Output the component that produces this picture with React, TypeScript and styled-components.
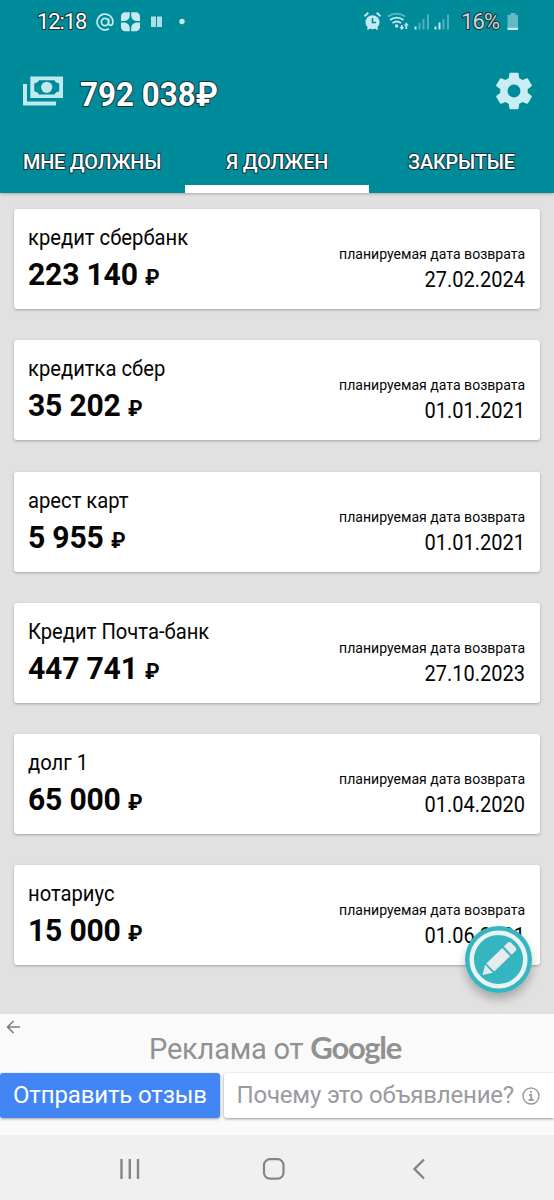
import React from "react";
import styled, { createGlobalStyle } from "styled-components";

const GlobalStyle = createGlobalStyle`
  * { box-sizing: border-box; }
  body { margin: 0; background: #e1e1e1; font-family: Roboto, "Noto Sans", sans-serif; color: #050505; }
  svg { display: block; flex: none; }
`;

const Screen = styled.div`
  width: 554px;
  height: 1200px;
  display: flex;
  flex-direction: column;
  overflow: hidden;
  position: relative;
`;

const Header = styled.header`
  height: 193px;
  flex: none;
  background: #008b9b;
  display: flex;
  flex-direction: column;
  box-shadow: 0 1px 3px rgba(0, 0, 0, 0.25);
`;

const Outlined = styled.span`
  color: #fff;
  -webkit-text-stroke: 2px #12343a;
  paint-order: stroke fill;
  white-space: nowrap;
`;

const StatusBar = styled.div`
  height: 44px;
  flex: none;
  padding: 0 35px 0 37px;
  display: flex;
  justify-content: space-between;
  align-items: center;
`;

const StatusGroup = styled.div`
  display: flex;
  align-items: center;
`;

const Clock = styled(Outlined)`
  font-size: 22px;
  line-height: 24px;
  width: 59px;
  letter-spacing: -1.1px;
`;

const Percent = styled(Outlined)`
  margin-left: 12px;
  font-size: 22px;
  line-height: 24px;
  color: #cdd5d6;
  width: 46px;
  letter-spacing: -0.9px;
`;

const TotalRow = styled.div`
  height: 97px;
  flex: none;
  padding: 0 18px 4px 23px;
  display: flex;
  align-items: center;
  justify-content: space-between;
`;

const TotalGroup = styled.div`
  display: flex;
  align-items: center;
  gap: 17px;
`;

const Total = styled(Outlined)`
  font-size: 33px;
  font-weight: 700;
  line-height: 38px;
  padding-top: 9px;
  transform: scaleX(0.95);
  transform-origin: left;
`;

const Tabs = styled.nav`
  flex: 1;
  display: grid;
  grid-template-columns: repeat(3, 1fr);
`;

const Tab = styled.div<{ $active?: boolean }>`
  border-bottom: 8px solid ${(p) => (p.$active ? "#fff" : "transparent")};
  padding-top: 9px;
  text-align: center;
  font-size: 21px;
  font-weight: 500;
  line-height: 24px;
  letter-spacing: -0.2px;
`;

const TabLabel = styled(Outlined)`
  display: inline-block;
  transform: scaleX(0.945);
`;

const List = styled.main`
  flex: 1;
  padding: 16px 14px 0;
  display: flex;
  flex-direction: column;
  gap: 31.3px;
`;

const Card = styled.article`
  height: 100px;
  flex: none;
  background: #fff;
  border-radius: 3px;
  box-shadow: 0 1px 3px rgba(0, 0, 0, 0.28);
  padding: 0 15px 0 14px;
  display: flex;
  justify-content: space-between;
  white-space: nowrap;
`;

const Debt = styled.div`
  padding-top: 16px;
`;

const Name = styled.div`
  font-size: 21.5px;
  line-height: 26px;
  transform: scaleX(0.94);
  transform-origin: left;
`;

const Amount = styled.div`
  margin-top: 5px;
  font-size: 32px;
  line-height: 36px;
  font-weight: 700;
  letter-spacing: -0.2px;
  transform: scaleX(0.94);
  transform-origin: left;
`;

const Currency = styled.span`
  font-size: 22px;
`;

const Due = styled.div`
  padding-top: 35px;
  text-align: right;
`;

const DueLabel = styled.div`
  font-size: 15.5px;
  line-height: 20px;
  transform: scaleX(0.907);
  transform-origin: right;
`;

const DueDate = styled.div`
  margin-top: 3px;
  font-size: 21.5px;
  line-height: 26px;
  transform: scaleX(0.93);
  transform-origin: right;
`;

const EditButton = styled.div`
  position: absolute;
  right: 22px;
  bottom: 207px;
  width: 67px;
  height: 67px;
  border-radius: 50%;
  box-shadow: 0 6px 10px rgba(0, 0, 0, 0.25);
`;

const Ad = styled.section`
  height: 121px;
  flex: none;
  background: #fafafa;
  color: #919191;
`;

const AdTitle = styled.div`
  height: 59px;
  padding: 6px 0 0 6px;
  display: flex;
  align-items: flex-start;
`;

const AdText = styled.div`
  margin: 10px 0 0 128px;
  font-size: 29px;
  line-height: 34px;
  letter-spacing: -0.2px;
  display: flex;
  gap: 7px;
  align-items: baseline;
  white-space: nowrap;
`;

const Brand = styled.span`
  font-family: Lato, sans-serif;
  font-weight: 700;
  font-size: 31px;
  letter-spacing: -1.3px;
`;

const AdActions = styled.div`
  display: flex;
  gap: 4px;
  height: 45px;
  font-size: 24px;
  line-height: 45px;
  white-space: nowrap;
`;

const Feedback = styled.div`
  width: 219.5px;
  background: #4285f4;
  color: #fff;
  border-radius: 3px;
  box-shadow: 0 1px 3px rgba(0, 0, 0, 0.35);
  padding-left: 13px;
  letter-spacing: -0.15px;
`;

const Why = styled.div`
  flex: 1;
  background: #fff;
  color: #9a9a9f;
  border-radius: 3px 0 0 3px;
  box-shadow: 0 1px 3px rgba(0, 0, 0, 0.4);
  padding-left: 13px;
  letter-spacing: -0.18px;
  display: flex;
  align-items: center;
  gap: 8px;
`;

const NavBar = styled.footer`
  height: 65px;
  flex: none;
  background: #f0f0f0;
  padding: 3px 63px 0 58px;
  display: grid;
  grid-template-columns: repeat(3, 1fr);
  align-items: center;
  justify-items: center;
`;

const debts = [
  { name: "кредит сбербанк", amount: "223 140", date: "27.02.2024" },
  { name: "кредитка сбер", amount: "35 202", date: "01.01.2021" },
  { name: "арест карт", amount: "5 955", date: "01.01.2021" },
  { name: "Кредит Почта-банк", amount: "447 741", date: "27.10.2023" },
  { name: "долг 1", amount: "65 000", date: "01.04.2020" },
  { name: "нотариус", amount: "15 000", date: "01.06.2021" },
];

const light = "#c5eaf0";

const NotificationIcons = () => (
  <svg width="92" height="24" viewBox="0 0 92 24" fill={light}>
    <g fill="none" stroke={light} strokeWidth="1.7">
      <circle cx="9" cy="12" r="3.6" />
      <path d="M12.6 8.4V13c0 3.6 4.3 3.2 4.3-1A7.9 7.9 0 1 0 13 18.8" />
    </g>
    <g transform="translate(25 2.200)">
      <path d="M8.800 0v2.500c0 4-2.300 6.300-6.300 6.300H0V5c0-3.500 1.500-5 5-5zM10.200 0v2.500c0 4 2.300 6.300 6.300 6.300H19V5c0-3.500-1.500-5-5-5zM8.800 19v-2.500c0-4-2.300-6.300-6.300-6.300H0V14c0 3.500 1.500 5 5 5zM10.200 19v-2.500c0-4 2.300-6.300 6.300-6.300H19V14c0 3.500-1.500 5-5 5z" />
    </g>
    <path d="M55 6.500h5v10.500h-5zM61 6.500h5v10.500h-5z" opacity=".88" />
    <circle cx="86" cy="11.500" r="2.700" />
  </svg>
);

const SignalIcons = () => (
  <svg width="86" height="24" viewBox="0 0 86 24" fill={light}>
    <circle cx="9.500" cy="12.200" r="7" />
    <path d="M1.500 6.200l3.800-3.400M17.500 6.200l-3.800-3.400M4.500 19.500l2-2.500M14.500 19.500l-2-2.500" stroke={light} strokeWidth="2" />
    <path d="M9.500 8v4.500h3.600" fill="none" stroke="#008b9b" strokeWidth="1.600" />
    <g fill="none" stroke={light} strokeWidth="1.700">
      <path d="M25 6.500c5-3.800 12-3.800 17 0" opacity=".45" />
      <path d="M27 10c4-3.200 9.500-3.200 13.500 0M29.500 13.200c2.500-2 6-2 8.500 0" />
      <path d="M38.800 15v3.500M43.300 19V15" />
    </g>
    <circle cx="33.600" cy="16" r="1.700" />
    <path d="M36.300 17h5l-2.500 3zM40.800 15.500h5l-2.500-3z" />
    <path d="M51.500 16.500h2v3h-2zM71.500 16.500h2v3h-2zM75.500 12.500h2v7h-2z" />
    <path d="M55.500 13h2v6.500h-2zM59.500 9h2v10.500h-2zM64 4.500h2v15h-2zM79.500 9h2v10.500h-2zM84 4.500h2v15h-2z" opacity=".4" />
  </svg>
);

const BatteryIcon = () => (
  <svg width="12" height="18" viewBox="0 0 12 18" fill={light}>
    <path d="M3.500 0h5v2H11v12.500H.5V2h3z" opacity=".5" />
    <path d="M.5 14.500H11V17H.5z" />
  </svg>
);

const CashIcon = () => (
  <svg width="40" height="30" viewBox="0 0 40 30" fill="#bde9ef">
    <path d="M0 8h4v17.500h29V29.500H0z" />
    <path fillRule="evenodd" d="M7.300 0.500H40V22H7.300zM16 4.200c-.8 1.800-2.300 2.800-4.700 3v8.200c2.400.2 3.900 1.200 4.700 3h15.500c.8-1.800 2.300-2.800 4.700-3V7.200c-2.400-.2-3.900-1.200-4.700-3z" />
    <circle cx="23.700" cy="11.300" r="5.600" />
  </svg>
);

const GearIcon = () => (
  <svg width="44" height="44" viewBox="0 0 24 24" fill="#c8edf2">
    <path d="M19.430 12.980c.04-.32.07-.64.07-.98s-.03-.66-.07-.98l2.110-1.650c.19-.15.24-.42.12-.64l-2-3.460c-.12-.22-.39-.3-.61-.22l-2.490 1c-.52-.4-1.080-.73-1.690-.98l-.38-2.650C14.460 2.180 14.250 2 14 2h-4c-.25 0-.46.18-.49.42l-.38 2.650c-.61.25-1.170.59-1.690.98l-2.490-1c-.23-.09-.49 0-.61.22l-2 3.460c-.13.22-.07.49.12.64l2.110 1.650c-.04.32-.07.65-.07.98s.03.66.07.98l-2.110 1.650c-.19.15-.24.42-.12.64l2 3.460c.12.22.39.3.61.22l2.490-1c.52.4 1.080.73 1.690.98l.38 2.650c.03.24.24.42.49.42h4c.25 0 .46-.18.49-.42l.38-2.650c.61-.25 1.170-.59 1.690-.98l2.490 1c.23.09.49 0 .61-.22l2-3.460c.12-.22.07-.49-.12-.64l-2.110-1.650zM12 15.500c-1.930 0-3.500-1.570-3.500-3.500s1.570-3.500 3.500-3.500 3.500 1.570 3.500 3.500-1.570 3.500-3.500 3.500z" />
  </svg>
);

const PencilIcon = () => (
  <svg width="67" height="67" viewBox="0 0 67 67">
    <circle cx="33.500" cy="33.500" r="33.500" fill="#35b5c0" />
    <circle cx="33.500" cy="33.500" r="26.800" fill="none" stroke="#e9f3f3" strokeWidth="4.500" />
    <g transform="translate(17.500 49) rotate(-44)" fill="#e6eaea">
      <path d="M0 0L9-5.500V5.500z" />
      <path d="M10.800-5.700H33V5.700H10.800z" />
      <path d="M35-5.700h5a3 3 0 0 1 3 3v5.400a3 3 0 0 1-3 3h-5z" />
      <path d="M12-2H32M12 2H32" stroke="#f5f5f5" strokeWidth=".8" />
    </g>
  </svg>
);

export default function App() {
  return (
    <Screen>
      <GlobalStyle />
      <Header>
        <StatusBar>
          <StatusGroup>
            <Clock>12:18</Clock>
            <NotificationIcons />
          </StatusGroup>
          <StatusGroup>
            <SignalIcons />
            <Percent>16%</Percent>
            <BatteryIcon />
          </StatusGroup>
        </StatusBar>
        <TotalRow>
          <TotalGroup>
            <CashIcon />
            <Total>792 038₽</Total>
          </TotalGroup>
          <GearIcon />
        </TotalRow>
        <Tabs>
          <Tab><TabLabel>МНЕ ДОЛЖНЫ</TabLabel></Tab>
          <Tab $active><TabLabel>Я ДОЛЖЕН</TabLabel></Tab>
          <Tab><TabLabel>ЗАКРЫТЫЕ</TabLabel></Tab>
        </Tabs>
      </Header>
      <List>
        {debts.map((d) => (
          <Card key={d.name}>
            <Debt>
              <Name>{d.name}</Name>
              <Amount>{d.amount} <Currency>₽</Currency></Amount>
            </Debt>
            <Due>
              <DueLabel>планируемая дата возврата</DueLabel>
              <DueDate>{d.date}</DueDate>
            </Due>
          </Card>
        ))}
      </List>
      <EditButton><PencilIcon /></EditButton>
      <Ad>
        <AdTitle>
          <svg width="15" height="14" viewBox="0 0 15 14" fill="none" stroke="#7d7d7d" strokeWidth="1.600">
            <path d="M14 7H1.500M7.500 1L1.500 7l6 6" />
          </svg>
          <AdText>Реклама от <Brand>Google</Brand></AdText>
        </AdTitle>
        <AdActions>
          <Feedback>Отправить отзыв</Feedback>
          <Why>
            Почему это объявление?
            <svg width="18" height="18" viewBox="0 0 18 18" fill="none" stroke="#9a9a9a" strokeWidth="1.400">
              <circle cx="9" cy="9" r="8" />
              <path d="M7 7.800h2.200V13M6.700 13h5M8 4.800h2" strokeWidth="1.800" />
            </svg>
          </Why>
        </AdActions>
      </Ad>
      <NavBar>
        <svg width="22" height="22" viewBox="0 0 22 22" stroke="#858585" strokeWidth="2.400">
          <path d="M2.500 1v20M10.800 1v20M19 1v20" />
        </svg>
        <svg width="24" height="22" viewBox="0 0 24 22" fill="none" stroke="#858585" strokeWidth="2.200">
          <rect x="2" y="1.200" width="19.500" height="19.500" rx="6" />
        </svg>
        <svg width="14" height="22" viewBox="0 0 14 22" fill="none" stroke="#858585" strokeWidth="2.400">
          <path d="M12 1.500L2.500 11l9.500 9.500" />
        </svg>
      </NavBar>
    </Screen>
  );
}
